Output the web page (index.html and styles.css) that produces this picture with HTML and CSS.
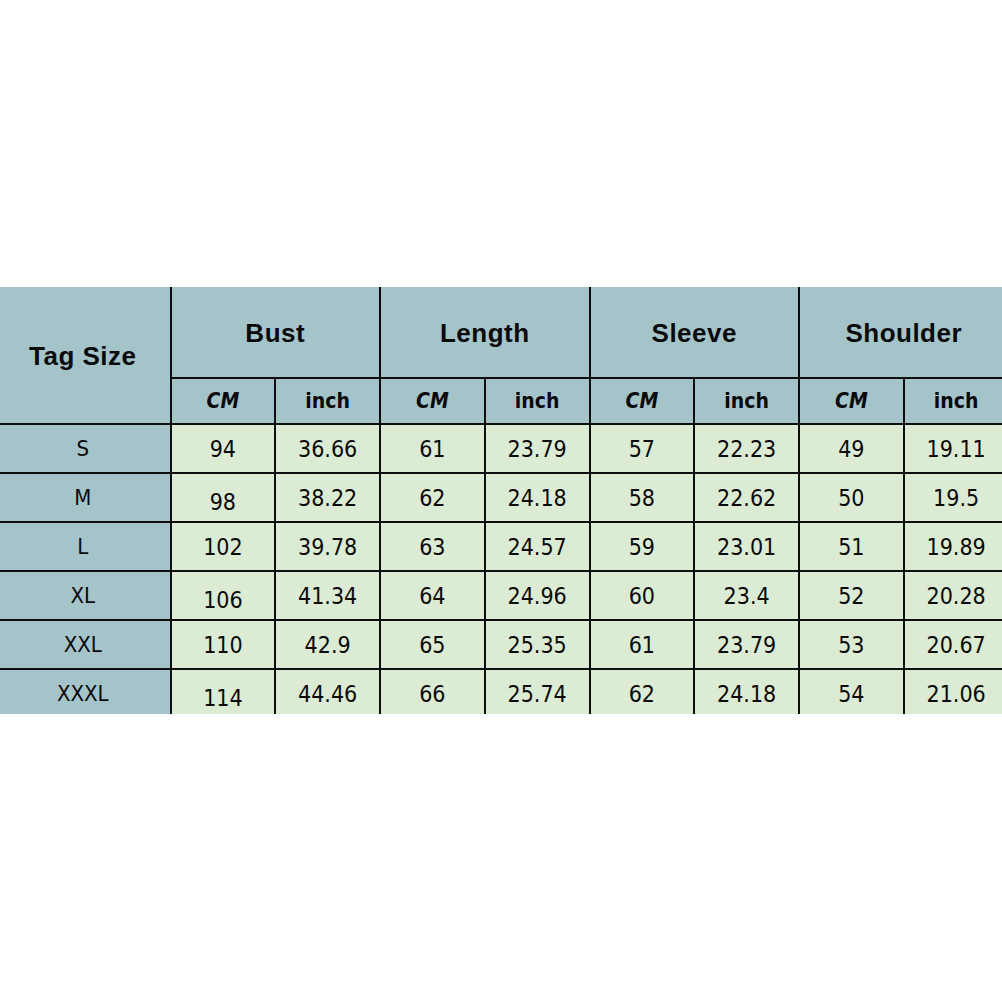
FILE: index.html
```html
<!DOCTYPE html>
<html>
<head>
<meta charset="utf-8">
<link rel="stylesheet" href="styles.css">
</head>
<body>
<div class="page">
  <div class="frame">
    <div class="chart">
      <div class="cell head tag">Tag Size</div>
      <div class="cell head group">Bust</div>
      <div class="cell head group">Length</div>
      <div class="cell head group">Sleeve</div>
      <div class="cell head group">Shoulder</div>

      <div class="cell head unit cm">CM</div><div class="cell head unit">inch</div>
      <div class="cell head unit cm">CM</div><div class="cell head unit">inch</div>
      <div class="cell head unit cm">CM</div><div class="cell head unit">inch</div>
      <div class="cell head unit cm">CM</div><div class="cell head unit">inch</div>

      <div class="cell size">S</div>
      <div class="cell val">94</div><div class="cell val">36.66</div>
      <div class="cell val">61</div><div class="cell val">23.79</div>
      <div class="cell val">57</div><div class="cell val">22.23</div>
      <div class="cell val">49</div><div class="cell val">19.11</div>

      <div class="cell size">M</div>
      <div class="cell val low">98</div><div class="cell val">38.22</div>
      <div class="cell val">62</div><div class="cell val">24.18</div>
      <div class="cell val">58</div><div class="cell val">22.62</div>
      <div class="cell val">50</div><div class="cell val">19.5</div>

      <div class="cell size">L</div>
      <div class="cell val">102</div><div class="cell val">39.78</div>
      <div class="cell val">63</div><div class="cell val">24.57</div>
      <div class="cell val">59</div><div class="cell val">23.01</div>
      <div class="cell val">51</div><div class="cell val">19.89</div>

      <div class="cell size">XL</div>
      <div class="cell val low">106</div><div class="cell val">41.34</div>
      <div class="cell val">64</div><div class="cell val">24.96</div>
      <div class="cell val">60</div><div class="cell val">23.4</div>
      <div class="cell val">52</div><div class="cell val">20.28</div>

      <div class="cell size">XXL</div>
      <div class="cell val">110</div><div class="cell val">42.9</div>
      <div class="cell val">65</div><div class="cell val">25.35</div>
      <div class="cell val">61</div><div class="cell val">23.79</div>
      <div class="cell val">53</div><div class="cell val">20.67</div>

      <div class="cell size">XXXL</div>
      <div class="cell val low">114</div><div class="cell val">44.46</div>
      <div class="cell val">66</div><div class="cell val">25.74</div>
      <div class="cell val">62</div><div class="cell val">24.18</div>
      <div class="cell val">54</div><div class="cell val">21.06</div>
    </div>
  </div>
</div>
</body>
</html>
```
FILE: styles.css
```css
html, body {
  margin: 0;
  padding: 0;
  background: #ffffff;
}

.page {
  width: 1002px;
  height: 1002px;
  display: flex;
  align-items: center;
  overflow: hidden;
}

.frame {
  width: 1002px;
  height: 427px;
  margin-top: -1px;
  overflow: hidden;
}

.chart {
  width: 1010px;
  display: grid;
  grid-template-columns: 169.5px repeat(8, 102.75px);
  grid-template-rows: 90px 44px repeat(5, 47px) 47px;
  gap: 2px;
  background: #0d0d0d;
}

.cell {
  display: flex;
  align-items: center;
  justify-content: center;
  color: #0a0a0a;
  font-family: "DejaVu Sans Condensed", "DejaVu Sans", sans-serif;
  font-stretch: condensed;
  font-size: 23px;
}

.head {
  background: #a4c4ca;
}

.tag {
  grid-row: 1 / span 2;
  font-family: "Liberation Sans", Arial, sans-serif;
  font-stretch: normal;
  font-weight: bold;
  font-size: 26px;
  letter-spacing: 0.5px;
  padding-top: 2px;
  padding-right: 4px;
}

.group {
  grid-column: span 2;
  font-family: "Liberation Sans", Arial, sans-serif;
  font-stretch: normal;
  font-weight: bold;
  font-size: 26px;
  letter-spacing: 0.5px;
  padding-top: 2px;
}

.unit {
  font-weight: bold;
  font-size: 21px;
}

.unit.cm {
  font-style: oblique;
}

.size {
  background: #a4c4ca;
  font-size: 22px;
  padding-right: 4px;
}

.val {
  background: #dcebd4;
}

.val.low {
  padding-top: 8px;
}
```
